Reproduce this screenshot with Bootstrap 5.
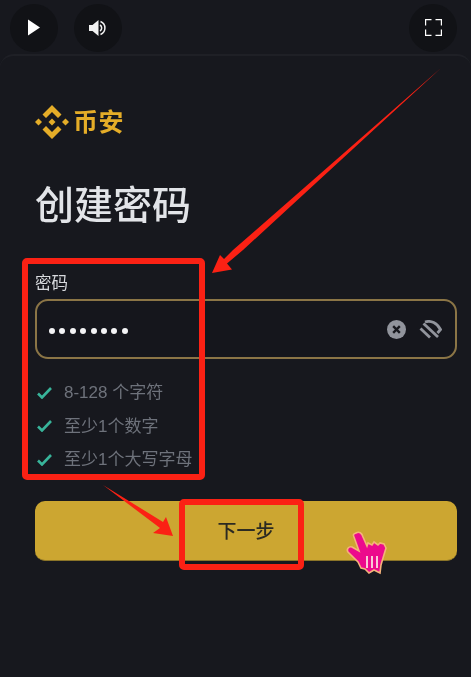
<!DOCTYPE html>
<html lang="zh-CN">
<head>
<meta charset="utf-8">
<title>创建密码</title>
<link href="https://cdn.jsdelivr.net/npm/bootstrap@5.3.0/dist/css/bootstrap.min.css" rel="stylesheet">
<style>
html,body{height:100%}
body{background:#17181e;font-family:"Liberation Sans","Noto Sans CJK SC",sans-serif;color:#eaecef;overflow:hidden;position:relative;width:471px;height:677px}
.topbar{height:54px;padding:1px 14px 0 10px}
.round-btn{width:48px;height:48px;border-radius:50%;background:#111216;border:0;padding:0}
.sheet{height:623px;border-top:2px solid #1f2026;border-top-left-radius:14px;border-top-right-radius:14px;padding:48px 14px 0 35px;filter:blur(.35px)}
.logo-word{font-size:25px;line-height:32px;font-weight:700;color:#e5ad28;letter-spacing:.5px}
.page-title{font-size:39px;line-height:50px;font-weight:500;color:#e2e4e8;margin:41px 0 0 0}
.field-label{font-size:16.5px;line-height:24px;color:#d8dade;margin:40px 0 4px}
.pw-box{height:60px;border:2px solid #8b7546;border-radius:13px;padding:0 13px 0 12px;background:#15161c}
.pw-dots{gap:4.4px;padding-top:4px}
.pw-dots i{display:block;width:6px;height:6px;border-radius:50%;background:#f4f4f6}
.pw-actions{gap:13px}
.rule-list{margin:17px 0 0;padding:0;list-style:none}
.rule-list li{height:33.6px;font-size:17px;color:#6e727b;gap:12px;padding-left:2px}
.next-btn{height:60px;width:100%;margin-top:24px;background:#cca631;border:0;border-bottom:1px solid #8b7428;border-radius:10px;font-size:19px;font-weight:500;color:#2b2a22;padding:3px 0 0}
.next-btn:hover{background:#cca631}
.overlay{position:absolute;inset:0;pointer-events:none}
.mark-frame{position:absolute;border:6px solid #fb2114;border-radius:5px}
.frame-a{left:22px;top:258px;width:183px;height:222px}
.frame-b{left:179px;top:499px;width:125px;height:71px}
</style>
</head>
<body>
<div class="topbar d-flex align-items-center justify-content-between">
  <div class="d-flex gap-3">
    <button class="round-btn d-flex align-items-center justify-content-center" aria-label="播放">
      <svg width="14" height="17" viewBox="0 0 14 17"><path d="M1 .5 13 8.500 1 16.500Z" fill="#fff"/></svg>
    </button>
    <button class="round-btn d-flex align-items-center justify-content-center" aria-label="声音">
      <svg width="20" height="18" viewBox="0 0 20 18"><path d="M1 6h3.500L10.500 1v16L4.500 12H1Z" fill="#f2f2f2"/><path d="M12 6a3.500 3.500 0 0 1 0 6M12.500 2.500a7 7 0 0 1 0 13" fill="none" stroke="#f2f2f2" stroke-width="1.500"/></svg>
    </button>
  </div>
  <button class="round-btn d-flex align-items-center justify-content-center" aria-label="全屏">
    <svg width="17" height="17" viewBox="0 0 17 17" fill="none" stroke="#fff" stroke-width="1.200"><path d="M.6 6.500V.6H6.500M10.500 .6h5.900V6.500M16.400 10.500v5.900H10.500M6.500 16.400H.6V10.500"/></svg>
  </button>
</div>
<main class="sheet">
  <div class="d-flex align-items-center gap-1" style="height:36px">
    <svg width="34" height="34" viewBox="0 0 34 34" fill="#e5ad28" class="flex-shrink-0"><path d="M17 0 26.500 9.500 23 13 17 7 11 13 7.500 9.500Z"/><path d="M17 34 7.500 24.500 11 21 17 27 23 21 26.500 24.500Z"/><path d="M3.500 13.500 7 17 3.500 20.500 0 17Z"/><path d="M30.500 13.500 34 17 30.500 20.500 27 17Z"/><path d="M17 13.500 20.500 17 17 20.500 13.500 17Z"/></svg>
    <span class="logo-word">币安</span>
  </div>
  <h1 class="page-title">创建密码</h1>
  <label class="field-label d-block">密码</label>
  <div class="pw-box d-flex align-items-center justify-content-between">
    <div class="pw-dots d-flex" aria-label="密码"><i></i><i></i><i></i><i></i><i></i><i></i><i></i><i></i></div>
    <div class="pw-actions d-flex align-items-center">
      <svg width="19" height="19" viewBox="0 0 20 20"><circle cx="10" cy="10" r="10" fill="#91949c"/><path d="M6.500 6.500l7 7M13.500 6.500l-7 7" stroke="#17181e" stroke-width="2.500"/></svg>
      <svg width="23" height="19" viewBox="0 0 23 19" fill="none" stroke="#91949c" stroke-width="2.800"><path d="M1.500 8.500 11 17.500"/><path d="M4.500 3.500 19 17"/><path d="M6 2C12 0 18 3 21.500 9.500L18.500 13"/></svg>
    </div>
  </div>
  <ul class="rule-list">
    <li class="d-flex align-items-center"><svg width="15" height="12" viewBox="0 0 15 12" fill="none" stroke="#38b49a" stroke-width="2.600"><path d="M1 6.500 5 10.500 14 1"/></svg><span>8-128 个字符</span></li>
    <li class="d-flex align-items-center"><svg width="15" height="12" viewBox="0 0 15 12" fill="none" stroke="#38b49a" stroke-width="2.600"><path d="M1 6.500 5 10.500 14 1"/></svg><span>至少1个数字</span></li>
    <li class="d-flex align-items-center"><svg width="15" height="12" viewBox="0 0 15 12" fill="none" stroke="#38b49a" stroke-width="2.600"><path d="M1 6.500 5 10.500 14 1"/></svg><span>至少1个大写字母</span></li>
  </ul>
  <button class="next-btn btn">下一步</button>
</main>
<div class="overlay" aria-hidden="true">
  <div class="mark-frame frame-a"></div>
  <div class="mark-frame frame-b"></div>
  <svg width="471" height="677" viewBox="0 0 471 677" class="position-absolute top-0 start-0">
    <path d="M441 68 243 250 227 263.500 232 269.500 212 273 220 255 224 259 233 250Z" fill="#fb2114"/>
    <path d="M103 485 163 522 166 517 173 536 153 533 160 528Z" fill="#fb2114"/>
    <path d="M356 533c3-2 6 0 7 4l4 9 1-3 4 2 2-3 4 3 2-2 4 1 2 4-3 10-2 7-1 8-6-3-5 3-4-4-4-1-3-6-10-10c-2-3 1-6 4-5l7 4-5-14c-1-2-1-3 2-4Z" fill="#ec0a8c" stroke="#f4b27a" stroke-width="1.600"/>
    <path d="M367 556v12M372 556v12M377 556v12" stroke="#f9c9d5" stroke-width="2"/>
  </svg>
</div>
</body>
</html>
